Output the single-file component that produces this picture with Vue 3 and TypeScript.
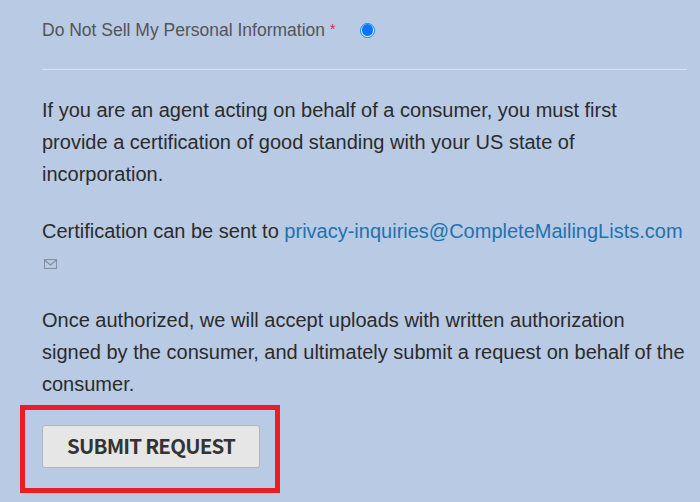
<script setup lang="ts">
const email = 'privacy-inquiries@CompleteMailingLists.com'
</script>

<template>
  <main class="page">
    <div class="field">
      <span class="label">Do Not Sell My Personal Information <span class="req">*</span></span>
      <span class="radio"></span>
    </div>
    <hr class="rule" />
    <p>If you are an agent acting on behalf of a consumer, you must first provide a certification of good standing with your US state of incorporation.</p>
    <p>Certification can be sent to <a class="link" href="#">{{ email }}</a>
      <span class="mail-line">
        <svg class="mail" width="13" height="10" viewBox="0 0 13 10" fill="none" stroke="#858e9e" stroke-width="1.1">
          <rect x="0.5" y="0.5" width="12" height="9" />
          <path d="M0.5 1 L6.5 6 L12.5 1" />
        </svg>
      </span>
    </p>
    <p class="last">Once authorized, we will accept uploads with written authorization signed by the consumer, and ultimately submit a request on behalf of the consumer.</p>
    <div class="action">
      <button class="submit" type="button">SUBMIT REQUEST</button>
      <div class="highlight"></div>
    </div>
  </main>
</template>

<style>
html, body { margin: 0; background: #b9cae4; }
</style>

<style scoped>
.page {
  box-sizing: border-box;
  width: 700px;
  height: 502px;
  overflow: hidden;
  padding: 14px 13px 0 42px;
  background: #b9cae4;
  color: #2b2b2b;
  font-family: "Liberation Sans", Arial, sans-serif;
  font-size: 20px;
  line-height: 32px;
}
.field {
  display: flex;
  align-items: center;
  height: 32px;
}
.label {
  color: #555;
  font-size: 17.5px;
  width: 318px;
  margin-top: -2px;
}
.req {
  color: #f0233a;
  font-size: 14px;
  vertical-align: 2px;
}
.radio {
  box-sizing: border-box;
  width: 15px;
  height: 15px;
  border-radius: 50%;
  border: 1.5px solid #0a75ff;
  background: #fff;
  position: relative;
}
.radio::after {
  content: "";
  position: absolute;
  inset: 0.75px;
  border-radius: 50%;
  background: #0a75ff;
}
.rule {
  margin: 23px 0 24px;
  border: 0;
  border-top: 1px solid #dbe3f0;
}
p {
  margin: 0 0 25px;
}
p.last {
  margin-bottom: 25px;
}
.link {
  color: #2272ad;
  text-decoration: none;
}
.mail-line {
  display: block;
  height: 32px;
}
.mail {
  display: block;
  padding-top: 12px;
  margin-left: 2px;
}
.action {
  position: relative;
}
.submit {
  box-sizing: border-box;
  display: block;
  width: 218px;
  height: 43px;
  padding: 0 0 2px;
  border: 1px solid #b5b5b5;
  border-radius: 3px;
  background: #e6e6e6;
  color: #333;
  font-family: "Noto Sans CJK SC", "Noto Sans", sans-serif;
  font-weight: 700;
  font-size: 20.5px;
  letter-spacing: -0.8px;
  line-height: 39px;
}
.highlight {
  position: absolute;
  left: -22px;
  top: -20px;
  width: 260px;
  height: 88px;
  box-sizing: border-box;
  border: 5px solid #ed1c24;
  pointer-events: none;
}
</style>
